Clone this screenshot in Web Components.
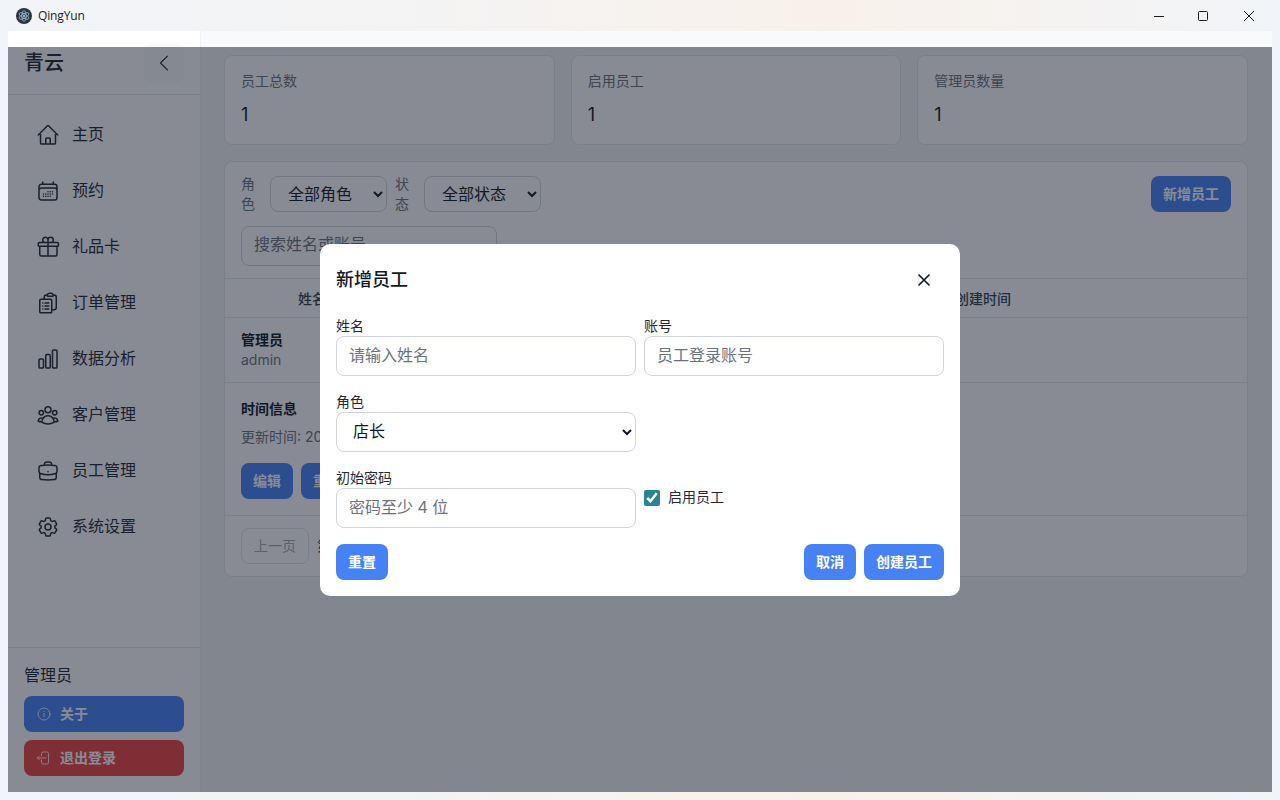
<!DOCTYPE html>
<html lang="zh-CN">
<head>
<meta charset="utf-8">
<title>QingYun</title>
<style>
  html, body { margin: 0; height: 100%; overflow: hidden; }
  body {
    font-family: Inter, "Noto Sans CJK SC", sans-serif;
    color: #111827;
    background: linear-gradient(90deg, #f1f4f8 0%, #f4f3f3 35%, #f8f1ea 65%, #f1f4f8 100%);
  }
</style>
</head>
<body>
<qy-app></qy-app>
<script>
const ICONS = {
  home: 'm2.25 12 8.954-8.955c.44-.439 1.152-.439 1.591 0L21.75 12M4.5 9.75v10.125c0 .621.504 1.125 1.125 1.125H9.75v-4.875c0-.621.504-1.125 1.125-1.125h2.25c.621 0 1.125.504 1.125 1.125V21h4.125c.621 0 1.125-.504 1.125-1.125V9.75M8.25 21h8.25',
  calendar: 'M6.75 3v2.25M17.25 3v2.25M3 18.75V7.5a2.25 2.25 0 0 1 2.25-2.25h13.5A2.25 2.25 0 0 1 21 7.5v11.25m-18 0A2.25 2.25 0 0 0 5.25 21h13.5A2.25 2.25 0 0 0 21 18.75m-18 0v-7.5A2.25 2.25 0 0 1 5.25 9h13.5A2.25 2.25 0 0 1 21 11.25v7.5m-9-6h.008v.008H12v-.008ZM12 15h.008v.008H12V15Zm0 2.25h.008v.008H12v-.008ZM9.75 15h.008v.008H9.75V15Zm0 2.25h.008v.008H9.75v-.008ZM7.5 15h.008v.008H7.5V15Zm0 2.25h.008v.008H7.5v-.008Zm6.75-4.5h.008v.008h-.008v-.008Zm0 2.25h.008v.008h-.008V15Zm0 2.25h.008v.008h-.008v-.008Zm2.25-4.5h.008v.008H16.5v-.008Zm0 2.25h.008v.008H16.5V15Z',
  gift: 'M21 11.25v8.25a1.5 1.5 0 0 1-1.5 1.5H5.25a1.5 1.5 0 0 1-1.5-1.5v-8.25M12 4.875A2.625 2.625 0 1 0 9.375 7.5H12m0-2.625V7.5m0-2.625A2.625 2.625 0 1 1 14.625 7.5H12m0 0V21m-8.625-9.75h18c.621 0 1.125-.504 1.125-1.125v-1.5c0-.621-.504-1.125-1.125-1.125h-18c-.621 0-1.125.504-1.125 1.125v1.5c0 .621.504 1.125 1.125 1.125Z',
  orders: 'M9 12h3.75M9 15h3.75M9 18h3.75m3 .75H18a2.25 2.25 0 0 0 2.25-2.25V6.108c0-1.135-.845-2.098-1.976-2.192a48.424 48.424 0 0 0-1.123-.08m-5.801 0c-.065.21-.1.433-.1.664 0 .414.336.75.75.75h4.5a.75.75 0 0 0 .75-.75 2.25 2.25 0 0 0-.1-.664m-5.8 0A2.251 2.251 0 0 1 13.5 2.25H15c1.012 0 1.867.668 2.15 1.586m-5.8 0c-.376.023-.75.05-1.124.08C9.095 4.01 8.25 4.973 8.25 6.108V8.25m0 0H4.875c-.621 0-1.125.504-1.125 1.125v11.25c0 .621.504 1.125 1.125 1.125h9.75c.621 0 1.125-.504 1.125-1.125V9.375c0-.621-.504-1.125-1.125-1.125H8.25ZM6.75 12h.008v.008H6.75V12Zm0 3h.008v.008H6.75V15Zm0 3h.008v.008H6.75V18Z',
  chart: 'M3 13.125C3 12.504 3.504 12 4.125 12h2.25c.621 0 1.125.504 1.125 1.125v6.75C7.5 20.496 6.996 21 6.375 21h-2.25A1.125 1.125 0 0 1 3 19.875v-6.75ZM9.75 8.625c0-.621.504-1.125 1.125-1.125h2.25c.621 0 1.125.504 1.125 1.125v11.25c0 .621-.504 1.125-1.125 1.125h-2.25a1.125 1.125 0 0 1-1.125-1.125V8.625ZM16.5 4.125c0-.621.504-1.125 1.125-1.125h2.25C20.496 3 21 3.504 21 4.125v15.75c0 .621-.504 1.125-1.125 1.125h-2.25a1.125 1.125 0 0 1-1.125-1.125V4.125Z',
  users: 'M18 18.72a9.094 9.094 0 0 0 3.741-.479 3 3 0 0 0-4.682-2.72m.94 3.198.001.031c0 .225-.012.447-.037.666A11.944 11.944 0 0 1 12 21c-2.17 0-4.207-.576-5.963-1.584A6.062 6.062 0 0 1 6 18.719m12 0a5.971 5.971 0 0 0-.941-3.197m0 0A5.995 5.995 0 0 0 12 12.75a5.995 5.995 0 0 0-5.058 2.772m0 0a3 3 0 0 0-4.681 2.72 8.986 8.986 0 0 0 3.74.477m.94-3.197a5.971 5.971 0 0 0-.94 3.197M15 6.75a3 3 0 1 1-6 0 3 3 0 0 1 6 0Zm6 3a2.25 2.25 0 1 1-4.5 0 2.25 2.25 0 0 1 4.5 0Zm-13.5 0a2.25 2.25 0 1 1-4.5 0 2.25 2.25 0 0 1 4.5 0Z',
  briefcase: 'M20.25 14.15v4.25c0 1.094-.787 2.036-1.872 2.18-2.087.277-4.216.42-6.378.42s-4.291-.143-6.378-.42c-1.085-.144-1.872-1.086-1.872-2.18v-4.25m16.5 0a2.18 2.18 0 0 0 .75-1.661V8.706c0-1.081-.768-2.015-1.837-2.175a48.114 48.114 0 0 0-3.413-.387m4.5 8.006c-.194.165-.42.295-.673.38A23.978 23.978 0 0 1 12 15.75c-2.648 0-5.195-.429-7.577-1.22a2.016 2.016 0 0 1-.673-.38m0 0A2.18 2.18 0 0 1 3 12.489V8.706c0-1.081.768-2.015 1.837-2.175a48.111 48.111 0 0 1 3.413-.387m7.5 0V5.25A2.25 2.25 0 0 0 13.5 3h-3a2.25 2.25 0 0 0-2.25 2.25v.894m7.5 0a48.667 48.667 0 0 0-7.5 0M12 12.75h.008v.008H12v-.008Z',
  cog: 'M9.594 3.94c.09-.542.56-.94 1.11-.94h2.593c.55 0 1.02.398 1.11.94l.213 1.281c.063.374.313.686.645.87.074.04.147.083.22.127.325.196.72.257 1.075.124l1.217-.456a1.125 1.125 0 0 1 1.37.49l1.296 2.247a1.125 1.125 0 0 1-.26 1.431l-1.003.827c-.293.241-.438.613-.43.992a7.723 7.723 0 0 1 0 .255c-.008.378.137.75.43.991l1.004.827c.424.35.534.955.26 1.43l-1.298 2.247a1.125 1.125 0 0 1-1.369.491l-1.217-.456c-.355-.133-.75-.072-1.076.124a6.47 6.47 0 0 1-.22.128c-.331.183-.581.495-.644.869l-.213 1.281c-.09.543-.56.94-1.11.94h-2.594c-.55 0-1.019-.398-1.11-.94l-.213-1.281c-.062-.374-.312-.686-.644-.87a6.52 6.52 0 0 1-.22-.127c-.325-.196-.72-.257-1.076-.124l-1.217.456a1.125 1.125 0 0 1-1.369-.49l-1.297-2.247a1.125 1.125 0 0 1 .26-1.431l1.004-.827c.292-.24.437-.613.43-.991a6.932 6.932 0 0 1 0-.255c.007-.38-.138-.751-.43-.992l-1.004-.827a1.125 1.125 0 0 1-.26-1.43l1.297-2.247a1.125 1.125 0 0 1 1.37-.491l1.216.456c.356.133.751.072 1.076-.124.072-.044.146-.086.22-.128.332-.183.582-.495.644-.869l.214-1.28ZM15 12a3 3 0 1 1-6 0 3 3 0 0 1 6 0Z',
  info: 'm11.25 11.25.041-.02a.75.75 0 0 1 1.063.852l-.708 2.836a.75.75 0 0 0 1.063.853l.041-.021M21 12a9 9 0 1 1-18 0 9 9 0 0 1 18 0Zm-9-3.75h.008v.008H12V8.25Z',
  logout: 'M8.25 9V5.25A2.25 2.25 0 0 1 10.5 3h6a2.25 2.25 0 0 1 2.25 2.25v13.5A2.25 2.25 0 0 1 16.5 21h-6a2.25 2.25 0 0 1-2.25-2.25V15m-3 0-3-3m0 0 3-3m-3 3H15',
  chevron: 'M15.75 19.5 8.25 12l7.5-7.5',
  close: 'M6 18 18 6M6 6l12 12'
};
const icon = (name, size, sw = 1.5) =>
  `<svg width="${size}" height="${size}" viewBox="0 0 24 24" fill="none" stroke="currentColor" stroke-width="${sw}" stroke-linecap="round" stroke-linejoin="round"><path d="${ICONS[name]}"></path></svg>`;

class QyTitlebar extends HTMLElement {
  connectedCallback() {
    this.attachShadow({ mode: 'open' });
    this.shadowRoot.innerHTML = `
      <style>
        :host { display: flex; align-items: center; height: 31px; font-size: 12px; color: #1f2328; font-family: "Open Sans", sans-serif; }
        .logo { width: 16px; height: 16px; margin-left: 16px; margin-right: 6px; }
        .title { flex: 1; letter-spacing: -.15px; }
        .ctl { width: 45px; height: 31px; display: flex; align-items: center; justify-content: center; }
        .ctl svg { display: block; }
        .max { width: 44px; }
        .close { width: 45px; padding-left: 1px; margin-right: 9px; }
      </style>
      <svg class="logo" viewBox="0 0 16 16">
        <circle cx="8" cy="8" r="8" fill="#2b3442"></circle>
        <g fill="none" stroke="#9fd0da" stroke-width=".7">
          <ellipse cx="8" cy="8" rx="5.4" ry="2.2" transform="rotate(30 8 8)"></ellipse>
          <ellipse cx="8" cy="8" rx="5.4" ry="2.2" transform="rotate(90 8 8)"></ellipse>
          <ellipse cx="8" cy="8" rx="5.4" ry="2.2" transform="rotate(150 8 8)"></ellipse>
        </g>
        <circle cx="8" cy="8" r="1" fill="#cfe6ea"></circle>
      </svg>
      <span class="title">QingYun</span>
      <span class="ctl"><svg width="10" height="10" viewBox="0 0 10 10"><path d="M0 5.5h10" stroke="#1b1b1b"></path></svg></span>
      <span class="ctl max"><svg width="10" height="10" viewBox="0 0 10 10"><rect x=".5" y=".5" width="9" height="9" rx="1" fill="none" stroke="#1b1b1b"></rect></svg></span>
      <span class="ctl close"><svg width="10" height="10" viewBox="0 0 10 10"><path d="M0 0l10 10M10 0L0 10" stroke="#1b1b1b"></path></svg></span>
    `;
  }
}

class QyNavItem extends HTMLElement {
  connectedCallback() {
    this.attachShadow({ mode: 'open' });
    this.shadowRoot.innerHTML = `
      <style>
        :host { display: flex; align-items: center; gap: 12px; height: 40px; padding-left: 28px; font-size: 16px; color: #1f2937; }
        svg { display: block; flex: none; }
        span { padding-bottom: 5px; }
      </style>
      ${icon(this.getAttribute('icon'), 24)}<span><slot></slot></span>
    `;
  }
}

class QyButton extends HTMLElement {
  connectedCallback() {
    const name = this.getAttribute('icon');
    this.attachShadow({ mode: 'open' });
    this.shadowRoot.innerHTML = `
      <style>
        :host { display: inline-flex; align-items: center; justify-content: center; gap: 8px; height: 36px; padding: 0 12px; box-sizing: border-box; border-radius: 8px; background: #4782f5; color: #fff; font-size: 14px; font-weight: 600; flex: none; }
        :host([variant="danger"]) { background: #ef4444; }
        :host([variant="ghost"]) { background: transparent; color: #a4a8b0; border: 1px solid #dfe2e7; font-weight: 400; }
        :host([wide]) { display: flex; justify-content: flex-start; }
        svg { display: block; opacity: .85; }
        span { padding-bottom: 2px; }
      </style>
      ${name ? icon(name, 16) : ''}<span><slot></slot></span>
    `;
  }
}

class QySidebar extends HTMLElement {
  connectedCallback() {
    this.attachShadow({ mode: 'open' });
    this.shadowRoot.innerHTML = `
      <style>
        :host { display: flex; flex-direction: column; width: 193px; flex: none; background: #fff; box-sizing: border-box; border-right: 1px solid #eef0f3; }
        .brand { display: flex; align-items: center; justify-content: space-between; height: 64px; box-sizing: border-box; padding: 0 16px; border-bottom: 1px solid #e5e7eb; }
        .brand b { font-size: 20px; font-weight: 500; color: #1f2937; padding-bottom: 2px; }
        .toggle { width: 40px; height: 40px; border-radius: 8px; background: #f9fafb; display: flex; align-items: center; justify-content: center; color: #1f2937; }
        nav { flex: 1; display: flex; flex-direction: column; gap: 16px; padding-top: 20px; }
        .foot { border-top: 1px solid #e5e7eb; padding: 16px; display: flex; flex-direction: column; gap: 8px; }
        .who { font-size: 16px; line-height: 22px; height: 24px; color: #1f2937; }
      </style>
      <div class="brand"><b>青云</b><span class="toggle">${icon('chevron', 22, 1.3)}</span></div>
      <nav>
        <qy-nav-item icon="home">主页</qy-nav-item>
        <qy-nav-item icon="calendar">预约</qy-nav-item>
        <qy-nav-item icon="gift">礼品卡</qy-nav-item>
        <qy-nav-item icon="orders">订单管理</qy-nav-item>
        <qy-nav-item icon="chart">数据分析</qy-nav-item>
        <qy-nav-item icon="users">客户管理</qy-nav-item>
        <qy-nav-item icon="briefcase">员工管理</qy-nav-item>
        <qy-nav-item icon="cog">系统设置</qy-nav-item>
      </nav>
      <div class="foot">
        <div class="who">管理员</div>
        <qy-button wide icon="info">关于</qy-button>
        <qy-button wide icon="logout" variant="danger">退出登录</qy-button>
      </div>
    `;
  }
}

class QyStat extends HTMLElement {
  connectedCallback() {
    this.attachShadow({ mode: 'open' });
    this.shadowRoot.innerHTML = `
      <style>
        :host { display: block; height: 90px; box-sizing: border-box; padding: 16px; background: #fff; border: 1px solid #e5e7eb; border-radius: 8px; }
        .label { font-size: 14px; line-height: 20px; color: #6b7280; margin-top: -1px; }
        .value { font-size: 18px; line-height: 28px; color: #111827; margin-top: 10px; }
      </style>
      <div class="label">${this.getAttribute('label')}</div>
      <div class="value">${this.getAttribute('value')}</div>
    `;
  }
}

class QyStaffPanel extends HTMLElement {
  connectedCallback() {
    this.attachShadow({ mode: 'open' });
    this.shadowRoot.innerHTML = `
      <style>
        :host { display: block; background: #fff; border: 1px solid #e5e7eb; border-radius: 8px; overflow: hidden; font-size: 14px; }
        .filters { display: flex; align-items: flex-start; gap: 8px; height: 36px; padding: 14px 16px 0; }
        .lab { width: 14px; line-height: 20px; color: #6b7280; margin-top: -2px; margin-right: 7px; }
        select { font: inherit; font-size: 16px; height: 36px; width: 117px; padding: 0 4px 0 13px; border: 1px solid #d1d5db; border-radius: 8px; background: #fff; color: #111827; }
        .spacer { flex: 1; }
        .search { margin: 14px 16px 12px; width: 256px; height: 40px; box-sizing: border-box; border: 1px solid #d1d5db; border-radius: 8px; padding: 0 12px; font-size: 16px; line-height: 35px; color: #6b7280; }
        .head { display: grid; grid-template-columns: 174px 1fr 528px; height: 38px; align-items: center; border-top: 1px solid #e5e7eb; border-bottom: 1px solid #e5e7eb; color: #374151; font-weight: 500; text-align: center; }
        .head span { padding-bottom: 1px; }
        .row { height: 65px; box-sizing: border-box; padding: 12px 16px 0; border-bottom: 1px solid #e5e7eb; line-height: 20px; }
        .row b, .info b { font-weight: 600; color: #111827; font-size: 14px; }
        .row span { color: #6b7280; display: block; }
        .info { height: 133px; box-sizing: border-box; padding: 16px 16px 0; border-bottom: 1px solid #e5e7eb; }
        .info b { display: block; line-height: 20px; }
        .info p { margin: 8px 0 16px; line-height: 20px; color: #6b7280; }
        .acts { display: flex; gap: 8px; }
        .pager { display: flex; align-items: center; gap: 8px; padding: 12px 16px; height: 36px; }
        .pager span { color: #374151; padding-bottom: 2px; }
      </style>
      <div class="filters">
        <span class="lab">角色</span>
        <select><option>全部角色</option></select>
        <span class="lab">状态</span>
        <select><option>全部状态</option></select>
        <span class="spacer"></span>
        <qy-button>新增员工</qy-button>
      </div>
      <div class="search">搜索姓名或账号</div>
      <div class="head"><span>姓名</span><span></span><span>创建时间</span></div>
      <div class="row"><b>管理员</b><span>admin</span></div>
      <div class="info">
        <b>时间信息</b>
        <p>更新时间: 20</p>
        <div class="acts"><qy-button>编辑</qy-button><qy-button>重</qy-button></div>
      </div>
      <div class="pager"><qy-button variant="ghost">上一页</qy-button><span>第</span></div>
    `;
  }
}

class QyField extends HTMLElement {
  connectedCallback() {
    this.attachShadow({ mode: 'open' });
    this.shadowRoot.innerHTML = `
      <style>
        :host { display: block; font-size: 14px; }
        label { display: block; line-height: 20px; color: #1f2937; }
      </style>
      <label>${this.getAttribute('label')}</label>
      <slot></slot>
    `;
  }
}

class QyDialog extends HTMLElement {
  connectedCallback() {
    this.attachShadow({ mode: 'open' });
    this.shadowRoot.innerHTML = `
      <style>
        :host { display: block; width: 640px; box-sizing: border-box; padding: 16px; background: #fff; border-radius: 10px; }
        header { display: flex; align-items: center; justify-content: space-between; height: 40px; margin-bottom: 16px; }
        h2 { margin: 0; font-size: 18px; font-weight: 500; color: #111827; padding-bottom: 4px; }
        .x { width: 40px; height: 40px; display: flex; align-items: center; justify-content: center; color: #111827; }
        .grid { display: grid; grid-template-columns: 1fr 1fr; column-gap: 8px; row-gap: 16px; }
        input[type=text], select { display: block; width: 100%; height: 40px; box-sizing: border-box; border: 1px solid #d1d5db; border-radius: 8px; padding: 0 12px 2px; font: inherit; font-size: 16px; color: #111827; background: #fff; outline: none; }
        input::placeholder { color: #6b7280; opacity: 1; }
        .check { display: flex; align-items: center; gap: 8px; height: 20px; margin-top: 20px; align-self: start; font-size: 14px; color: #1f2937; }
        .check input { width: 16px; height: 16px; margin: 0; accent-color: #2b8496; }
        .check span { padding-bottom: 3px; }
        footer { display: flex; gap: 8px; margin-top: 16px; }
        footer .spacer { flex: 1; }
      </style>
      <header><h2>新增员工</h2><span class="x">${icon('close', 20, 2)}</span></header>
      <div class="grid">
        <qy-field label="姓名"><input type="text" placeholder="请输入姓名"></qy-field>
        <qy-field label="账号"><input type="text" placeholder="员工登录账号"></qy-field>
        <qy-field label="角色"><select><option>店长</option></select></qy-field>
        <span></span>
        <qy-field label="初始密码"><input type="text" placeholder="密码至少 4 位"></qy-field>
        <label class="check"><input type="checkbox" checked><span>启用员工</span></label>
      </div>
      <footer>
        <qy-button>重置</qy-button>
        <span class="spacer"></span>
        <qy-button>取消</qy-button>
        <qy-button>创建员工</qy-button>
      </footer>
    `;
  }
}

class QyApp extends HTMLElement {
  connectedCallback() {
    this.attachShadow({ mode: 'open' });
    this.shadowRoot.innerHTML = `
      <style>
        :host { display: flex; flex-direction: column; height: 800px; }
        .frame { position: relative; display: flex; height: 761px; margin: 0 8px; }
        main { flex: 1; min-width: 0; background: #f3f4f6; padding: 8px 24px 0 23px; box-sizing: border-box; border-top: 16px solid #f8fafc; }
        .stats { display: grid; grid-template-columns: repeat(3, 1fr); gap: 16px; margin-bottom: 16px; }
        .backdrop { position: absolute; left: 0; right: 0; top: 16px; bottom: 0; background: rgba(17,24,39,.5); display: flex; align-items: center; justify-content: center; }
      </style>
      <qy-titlebar></qy-titlebar>
      <div class="frame">
        <qy-sidebar></qy-sidebar>
        <main>
          <div class="stats">
            <qy-stat label="员工总数" value="1"></qy-stat>
            <qy-stat label="启用员工" value="1"></qy-stat>
            <qy-stat label="管理员数量" value="1"></qy-stat>
          </div>
          <qy-staff-panel></qy-staff-panel>
        </main>
        <div class="backdrop"><qy-dialog></qy-dialog></div>
      </div>
    `;
  }
}

customElements.define('qy-titlebar', QyTitlebar);
customElements.define('qy-nav-item', QyNavItem);
customElements.define('qy-button', QyButton);
customElements.define('qy-sidebar', QySidebar);
customElements.define('qy-stat', QyStat);
customElements.define('qy-staff-panel', QyStaffPanel);
customElements.define('qy-field', QyField);
customElements.define('qy-dialog', QyDialog);
customElements.define('qy-app', QyApp);
</script>
</body>
</html>
